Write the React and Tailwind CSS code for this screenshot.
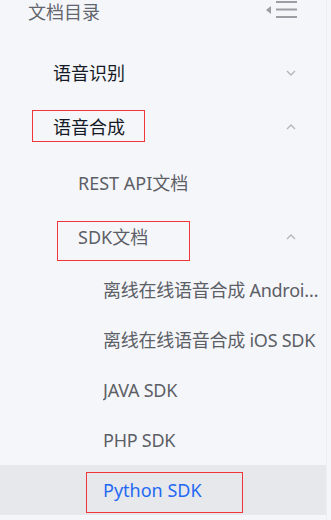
import React from "react";

const font = { fontFamily: '"Noto Sans", "Noto Sans CJK SC", sans-serif' };

const Chevron = ({ up }) => (
  <svg width="10" height="6" viewBox="0 0 10 6" className="shrink-0">
    <polyline
      points={up ? "1,5 5,1 9,5" : "1,1 5,5 9,1"}
      fill="none"
      stroke="#b3b6bd"
      strokeWidth="1.4"
    />
  </svg>
);

const MenuIcon = () => (
  <svg width="32" height="20" viewBox="0 0 32 20">
    <polygon points="0,10 5,6 5,14" fill="#9b9ea5" />
    <rect x="10" y="1" width="21" height="2" fill="#9b9ea5" />
    <rect x="10" y="8.5" width="21" height="2" fill="#9b9ea5" />
    <rect x="10" y="16" width="21" height="2" fill="#9b9ea5" />
  </svg>
);

// annotation box drawn over a row
const Mark = ({ className }) => (
  <span className={"absolute border border-[#f0363a] pointer-events-none " + className} />
);

const Row = ({ children, className = "", chevron, mark }) => (
  <div className={"relative flex items-center h-[50px] " + className}>
    <span className="flex-1 min-w-0 truncate leading-[24px]">{children}</span>
    {chevron && <Chevron up={chevron === "up"} />}
    {mark}
  </div>
);

const leaves = ["离线在线语音合成 Android SDK", "离线在线语音合成 iOS SDK", "JAVA SDK", "PHP SDK"];

export default function App() {
  return (
    <div className="w-[331px] h-[520px] overflow-hidden bg-[#f5f6fa] text-[18px]" style={font}>
      <div className="w-[327px] h-full border-r border-[#eceef2] flex flex-col">
        <div className="flex items-start justify-between h-[24px] pl-[28px] pr-[28px]">
          <span className="leading-[24px] text-[#62656c]">文档目录</span>
          <MenuIcon />
        </div>

        <Row className="mt-[24px] pl-[53px] pr-[30px] text-[#151b26]" chevron="down">
          语音识别
        </Row>
        <Row
          className="mt-[4px] pl-[53px] pr-[30px] text-[#151b26]"
          chevron="up"
          mark={<Mark className="left-[32px] top-[8px] w-[113px] h-[32px]" />}
        >
          语音合成
        </Row>
        <Row className="mt-[6px] pl-[78px] pr-[30px] text-[#5c5f66]">REST API文档</Row>
        <Row
          className="mt-[4px] pl-[78px] pr-[30px] text-[#5c5f66]"
          chevron="up"
          mark={<Mark className="left-[57px] top-[9px] w-[133px] h-[40px]" />}
        >
          SDK文档
        </Row>
        <div className="mt-[3px] flex flex-col">
          {leaves.map((t) => (
            <Row key={t} className="pl-[103px] pr-[5px] tracking-[-0.25px] text-[#5c5f66]">
              {t}
            </Row>
          ))}
          <Row
            className="pl-[103px] pr-[5px] bg-[#e7e8ec] text-[#2468f2]"
            mark={<Mark className="left-[86px] top-[7px] w-[157px] h-[41px]" />}
          >
            Python SDK
          </Row>
        </div>
      </div>
    </div>
  );
}
